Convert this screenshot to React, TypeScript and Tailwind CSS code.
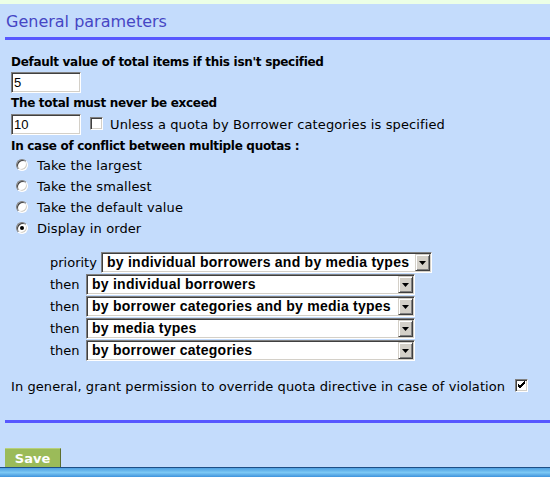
import { useState } from "react";

const sans = "font-['DejaVu_Sans',Verdana,sans-serif]";

const Radio = ({ checked }: { checked?: boolean }) => (
  <span className="flex h-[12px] w-[12px] items-center justify-center rounded-full border border-t-[#808080] border-l-[#808080] border-b-white border-r-white bg-white shadow-[inset_1px_1px_0_#404040,inset_-1px_-1px_0_#d4d0c8]">
    {checked && <span className="h-[4px] w-[4px] rounded-full bg-black" />}
  </span>
);

const Checkbox = ({ checked }: { checked?: boolean }) => (
  <span className="flex h-[13px] w-[13px] shrink-0 items-center justify-center border border-t-[#808080] border-l-[#808080] border-b-white border-r-white bg-white shadow-[inset_1px_1px_0_#404040,inset_-1px_-1px_0_#d4d0c8]">
    {checked && (
      <svg width="9" height="9" viewBox="0 0 9 9">
        <path d="M1 4 L3 6 L8 1 M1 5 L3 7 L8 2 M1 3 L3 5 L8 0" stroke="#000" strokeWidth="1" fill="none" />
      </svg>
    )}
  </span>
);

const FakeSelect = ({ value, width }: { value: string; width: string }) => (
  <div
    className={`flex h-[21px] ${width} border border-t-[#808080] border-l-[#808080] border-b-white border-r-white bg-white shadow-[inset_1px_1px_0_#404040,inset_-1px_-1px_0_#d4d0c8] p-[1px]`}
  >
    <span className="flex-1 truncate pl-[4px] font-['Liberation_Sans',Arial,sans-serif] text-[14px] font-bold leading-[17px] tracking-[0.25px] text-black">
      {value}
    </span>
    <span className="flex h-[17px] w-[15px] items-center justify-center border border-t-[#d4d0c8] border-l-[#d4d0c8] border-b-[#404040] border-r-[#404040] bg-[#d4d0c8] shadow-[inset_1px_1px_0_#fff,inset_-1px_-1px_0_#808080]">
      <svg width="7" height="4" viewBox="0 0 7 4" className="mt-[1px]">
        <path d="M0 0 H7 L3.5 4 Z" fill="#000" />
      </svg>
    </span>
  </div>
);

const Line = () => <div className="h-[3px] bg-[#5858ff]" />;

export default function App() {
  const [mode, setMode] = useState(3);
  const radios = [
    "Take the largest",
    "Take the smallest",
    "Take the default value",
    "Display in order",
  ];
  const priorities = [
    { label: "priority", value: "by individual borrowers and by media types" },
    { label: "then", value: "by individual borrowers" },
    { label: "then", value: "by borrower categories and by media types" },
    { label: "then", value: "by media types" },
    { label: "then", value: "by borrower categories" },
  ];

  return (
    <div className={`flex h-[477px] w-[550px] flex-col overflow-hidden bg-[#c4dcfc] ${sans} text-black`}>
      <div className="h-[4px] bg-[#ecffe6]" />

      <div className="flex flex-col pl-[5px]">
        <h2 className="mt-[8px] pl-[1px] text-[16px] font-normal leading-[20px] text-[#4646c4]">
          General parameters
        </h2>
        <div className="mt-[5px]">
          <Line />
        </div>

        <div className="flex flex-col pl-[6px]">
          <label className="mt-[14px] text-[12px] font-bold leading-[16px] tracking-[-0.3px]">
            Default value of total items if this isn't specified
          </label>
          <input
            defaultValue="5"
            className="mt-[2px] h-[21px] w-[70px] border border-t-[#808080] border-l-[#808080] border-b-white border-r-white bg-white px-[2px] font-['Liberation_Sans',Arial,sans-serif] text-[13px] shadow-[inset_1px_1px_0_#404040,inset_-1px_-1px_0_#d4d0c8] outline-none"
          />

          <label className="mt-[2px] text-[12px] font-bold leading-[16px] tracking-[-0.3px]">
            The total must never be exceed
          </label>
          <div className="mt-[3px] flex h-[21px] items-center">
            <input
              defaultValue="10"
              className="h-[21px] w-[70px] border border-t-[#808080] border-l-[#808080] border-b-white border-r-white bg-white px-[2px] font-['Liberation_Sans',Arial,sans-serif] text-[13px] shadow-[inset_1px_1px_0_#404040,inset_-1px_-1px_0_#d4d0c8] outline-none"
            />
            <span className="ml-[9px] -mt-[2px]">
              <Checkbox />
            </span>
            <span className="ml-[7px] text-[13px] leading-[21px] tracking-[0.12px]">
              Unless a quota by Borrower categories is specified
            </span>
          </div>

          <label className="mt-[3px] text-[12px] font-bold leading-[16px] tracking-[-0.3px]">
            In case of conflict between multiple quotas :
          </label>
          <div className="mt-[1px] flex flex-col">
            {radios.map((r, i) => (
              <div
                key={r}
                className="flex h-[21px] cursor-default items-center"
                onClick={() => setMode(i)}
              >
                <span className="ml-[5px] -mt-[1px]">
                  <Radio checked={mode === i} />
                </span>
                <span className="ml-[9px] text-[13px] leading-[21px] tracking-[0.1px]">{r}</span>
              </div>
            ))}
          </div>

          <div className="mt-[13px] flex flex-col">
            {priorities.map((p, i) => (
              <div key={i} className="flex h-[22px] items-start">
                <span
                  className={`ml-[39px] text-[13px] leading-[21px] ${i === 0 ? "w-[51px]" : "w-[36px]"}`}
                >
                  {p.label}
                </span>
                <FakeSelect value={p.value} width={i === 0 ? "w-[331px]" : "w-[329px]"} />
              </div>
            ))}
          </div>

          <div className="mt-[14px] flex h-[21px] items-center">
            <span className="text-[13px] leading-[21px] tracking-[0.08px]">
              In general, grant permission to override quota directive in case of violation
            </span>
            <span className="ml-[10px] -mt-[2px]">
              <Checkbox checked />
            </span>
          </div>
        </div>

        <div className="mt-[23px]">
          <Line />
        </div>

        <div className="mt-[25px] flex">
          <button
            type="button"
            className="h-[19px] w-[56px] border-t border-t-[#b8d07c] border-r border-r-[#5d6e2e] bg-[#9bbb59] text-[13px] font-bold leading-[17px] text-white"
          >
            Save
          </button>
        </div>
      </div>

      <div className="flex flex-1 flex-col">
        <div className="h-[1px] bg-[#1e4f86]" />
        <div className="flex-1 bg-gradient-to-b from-[#4e9fe0] via-[#7cc8f4] to-[#3f94dc]" />
      </div>
    </div>
  );
}
